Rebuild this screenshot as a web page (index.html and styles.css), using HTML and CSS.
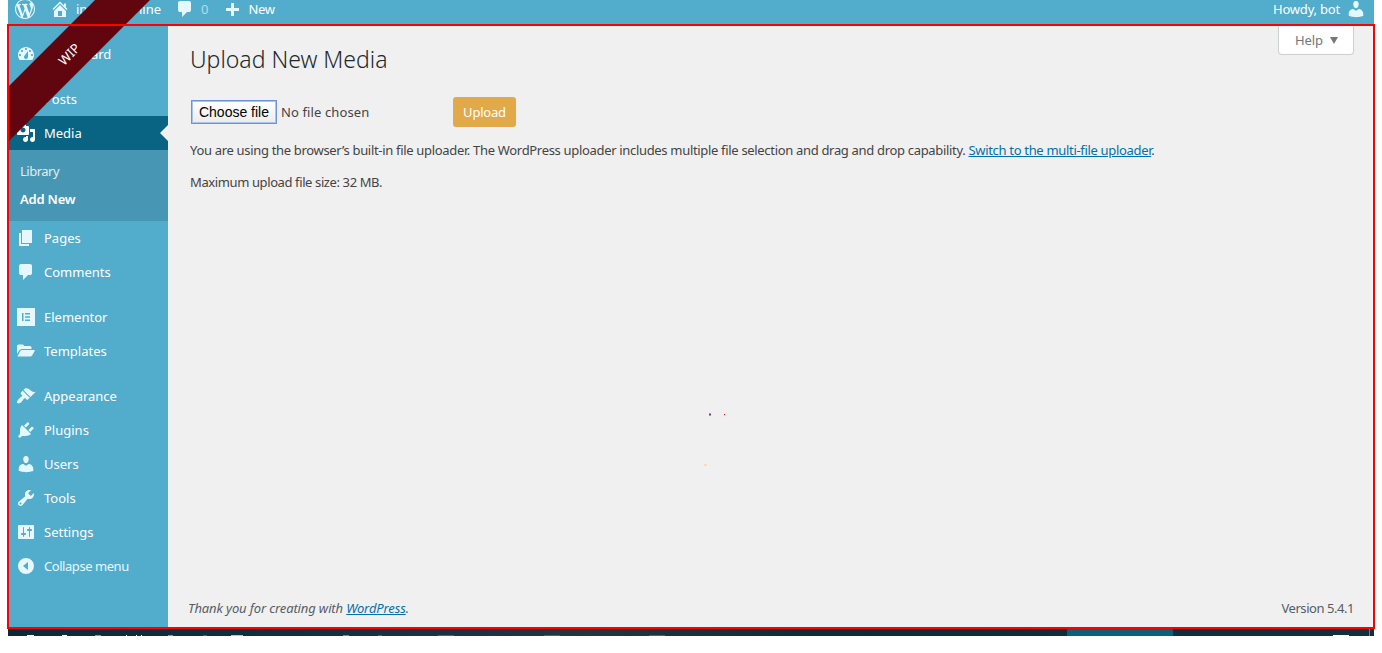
FILE: index.html
```html
<!DOCTYPE html>
<html lang="en">
<head>
<meta charset="utf-8">
<title>Upload New Media</title>
<link rel="stylesheet" href="styles.css">
</head>
<body>
<div class="screen">
  <header class="adminbar">
    <svg class="icon wp" viewBox="0 0 20 20"><path d="M20 10c0-5.51-4.49-10-10-10C4.48 0 0 4.49 0 10c0 5.52 4.48 10 10 10 5.51 0 10-4.48 10-10zM7.78 15.37L4.37 6.22c.55-.02 1.17-.08 1.17-.08.5-.06.44-1.13-.06-1.11 0 0-1.45.11-2.37.11-.18 0-.37 0-.58-.01C4.12 2.69 6.87 1.11 10 1.11c2.33 0 4.45.87 6.05 2.34-.68-.11-1.65.39-1.65 1.58 0 .74.45 1.36.9 2.1.35.61.55 1.36.55 2.46 0 1.49-1.4 5-1.4 5l-3.03-8.37c.54-.02.82-.17.82-.17.5-.05.44-1.25-.06-1.22 0 0-1.44.12-2.38.12-.87 0-2.33-.12-2.33-.12-.5-.03-.56 1.2-.06 1.22l.92.08 1.26 3.41zM17.41 10c.24-.64.74-1.87.43-4.25.7 1.29 1.05 2.71 1.05 4.25 0 3.29-1.73 6.24-4.4 7.78.97-2.59 1.94-5.2 2.92-7.78zM6.1 18.09C3.12 16.65 1.11 13.53 1.11 10c0-1.3.23-2.48.72-3.59C3.25 10.3 4.67 14.2 6.1 18.09zm4.03-6.63l2.58 6.98c-.86.29-1.76.45-2.71.45-.79 0-1.57-.11-2.29-.33.81-2.38 1.62-4.74 2.42-7.1z"/></svg>
    <svg class="icon home" viewBox="0 0 20 20"><path d="M16 8.5l1.53 1.53-1.06 1.06L10 4.6l-6.47 6.49-1.06-1.06L10 2.5l4 4v-2h2v4zm-6-2.46l6 5.99V18H4v-5.97zM12 17v-5H8v5h4z"/></svg>
    <span class="site"><span>int</span><span>line</span></span>
    <svg class="icon bubble" viewBox="0 0 20 20"><path d="M5 2h9q.82 0 1.41.59T16 4v7q0 .82-.59 1.41T14 13h-2l-5 5v-5H5q-.82 0-1.41-.59T3 11V4q0-.82.59-1.41T5 2z"/></svg>
    <span class="count">0</span>
    <svg class="icon plus" viewBox="0 0 20 20"><path d="M17 7v3h-5v5H9v-5H4V7h5V2h3v5h5z"/></svg>
    <span class="new">New</span>
    <span class="howdy">Howdy, bot</span>
    <svg class="icon me" viewBox="0 0 20 20"><path d="M10 9.25c-2.27 0-2.73-3.44-2.73-3.44C7 4.02 7.82 2 9.97 2c2.16 0 2.98 2.02 2.71 3.81 0 0-.41 3.44-2.68 3.44zm0 2.57L12.72 10c2.39 0 4.52 2.33 4.52 4.53v2.49s-3.65 1.13-7.24 1.13c-3.65 0-7.24-1.13-7.24-1.13v-2.49c0-2.25 1.94-4.48 4.47-4.48z"/></svg>
  </header>
  <div class="frame">
    <nav class="menu">
      <a class="item"><svg class="icon" viewBox="0 0 20 20"><path d="M3.76 16h12.48c1.1-1.37 1.76-3.11 1.76-5 0-4.42-3.58-8-8-8s-8 3.58-8 8c0 1.89.66 3.63 1.76 5zM10 4c.55 0 1 .45 1 1s-.45 1-1 1-1-.45-1-1 .45-1 1-1zM6 6c.55 0 1 .45 1 1s-.45 1-1 1-1-.45-1-1 .45-1 1-1zm8 0c.55 0 1 .45 1 1s-.45 1-1 1-1-.45-1-1 .45-1 1-1zm-5.37 5.55L12 7v6c0 1.1-.9 2-2 2s-2-.9-2-2c0-.57.24-1.08.63-1.45zM4 10c.55 0 1 .45 1 1s-.45 1-1 1-1-.45-1-1 .45-1 1-1zm12 0c.55 0 1 .45 1 1s-.45 1-1 1-1-.45-1-1 .45-1 1-1z"/></svg><span>Dashboard</span></a>
      <a class="item gap"><span class="icon"></span><span>Posts</span></a>
      <a class="item current"><svg class="icon" viewBox="0 0 20 20"><path d="M13 11V4c0-.55-.45-1-1-1h-1.67L9 1H5L3.67 3H2c-.55 0-1 .45-1 1v7c0 .55.45 1 1 1h10c.55 0 1-.45 1-1zM7 4.5c1.38 0 2.5 1.12 2.5 2.5S8.38 9.5 7 9.5 4.5 8.38 4.5 7 5.62 4.5 7 4.5zM14 6h5v10.5c0 1.38-1.12 2.5-2.5 2.5S14 17.88 14 16.5s1.12-2.5 2.5-2.5c.17 0 .34.02.5.05V9h-3V6zm-4 8.05V13h2v3.5c0 1.38-1.12 2.5-2.5 2.5S7 17.88 7 16.5 8.12 14 9.5 14c.17 0 .34.02.5.05z"/></svg><span>Media</span></a>
      <div class="submenu"><a class="library">Library</a><a class="active">Add New</a></div>
      <a class="item"><svg class="icon" viewBox="0 0 20 20"><path d="M6 15V2h10v13H6zm-1 1h8v2H3V5h2v11z"/></svg><span>Pages</span></a>
      <a class="item"><svg class="icon" viewBox="0 0 20 20"><path d="M5 2h9q.82 0 1.41.59T16 4v7q0 .82-.59 1.41T14 13h-2l-5 5v-5H5q-.82 0-1.41-.59T3 11V4q0-.82.59-1.41T5 2z"/></svg><span>Comments</span></a>
      <a class="item gap"><svg class="icon" viewBox="0 0 20 20"><path fill-rule="evenodd" d="M1.5 1H18.500q.5 0 .5.500V18.500q0 .5-.5.500H1.500q-.5 0-.5-.500V1.500q0-.5.500-.500zM6 6v8h1.500V6zM9 6v1.400h5V6zM9 9.300v1.400h5V9.300zM9 12.600V14h5v-1.400z"/></svg><span>Elementor</span></a>
      <a class="item"><svg class="icon" viewBox="0 0 20 20"><path d="M1 13V5q0-1.500 1.500-1.500h4q1.500 0 1.500 1.500h6q1.500 0 1.500 1.500V8H6q-1.800 0-2.800 1.600zM1.500 15.200L4.300 10q.6-1 1.800-1H18.200q1 0 .5 1l-2.600 4.400q-.6 1-1.800 1H2.500q-.6 0-1-.2z"/></svg><span>Templates</span></a>
      <a class="item gap"><svg class="icon" viewBox="0 0 20 20"><path d="M14.480 11.060L7.410 3.990l1.500-1.500c.5-.56 2.300-.47 3.510.32 1.210.8 1.430 1.280 2.910 2.100 1.180.64 2.450 1.260 4.450.85zm-.71.71L6.700 4.700 4.930 6.470c-.39.39-.39 1.020 0 1.410l1.060 1.060c.39.39.39 1.030 0 1.420-.6.6-1.430 1.110-2.210 1.690-.35.26-.7.53-1.010.84C1.430 14.230.4 16.080 1.400 17.070c.99 1 2.840-.03 4.180-1.360.31-.31.58-.66.85-1.020.57-.78 1.080-1.610 1.690-2.210.39-.39 1.020-.39 1.410 0l1.060 1.060c.39.39 1.020.39 1.410 0z"/></svg><span>Appearance</span></a>
      <a class="item"><svg class="icon" viewBox="0 0 20 20"><path d="M13.110 4.360L9.870 7.600 8 5.730l3.240-3.240c.35-.34 1.050-.2 1.560.32.52.51.66 1.210.31 1.550zm-8 1.770l.91-1.120 9.010 9.010-1.190.84c-.71.71-2.630 1.160-3.820 1.160H6.140L4.900 17.260c-.59.59-1.540.59-2.120 0-.59-.58-.59-1.530 0-2.120l1.240-1.240v-3.880c0-1.130.4-3.190 1.090-3.890zm7.260 3.970l3.240-3.240c.34-.35 1.040-.21 1.550.31.52.51.66 1.210.31 1.550l-3.240 3.250z"/></svg><span>Plugins</span></a>
      <a class="item"><svg class="icon" viewBox="0 0 20 20"><path d="M10 9.250c-2.270 0-2.730-3.440-2.730-3.440C7 4.020 7.820 2 9.970 2c2.160 0 2.980 2.020 2.710 3.810 0 0-.41 3.440-2.680 3.440zm0 2.570L12.720 10c2.390 0 4.520 2.330 4.520 4.530v2.490s-3.650 1.130-7.240 1.130c-3.650 0-7.240-1.130-7.240-1.130v-2.490c0-2.250 1.940-4.480 4.470-4.480z"/></svg><span>Users</span></a>
      <a class="item"><svg class="icon" viewBox="0 0 20 20"><path d="M16.680 9.770c-1.340 1.340-3.300 1.670-4.950.99l-5.410 6.520c-.99.99-2.590.99-3.580 0s-.99-2.590 0-3.570l6.520-5.420c-.68-1.650-.35-3.610.99-4.950 1.280-1.280 3.120-1.620 4.720-1.060l-2.890 2.890 2.820 2.820 2.860-2.870c.53 1.580.18 3.390-1.080 4.650zM3.810 16.210c.4.39 1.040.39 1.430 0 .4-.4.4-1.040 0-1.430-.39-.4-1.030-.4-1.430 0-.39.39-.39 1.030 0 1.430z"/></svg><span>Tools</span></a>
      <a class="item"><svg class="icon" viewBox="0 0 20 20"><path d="M18 16V4c0-.55-.45-1-1-1H3c-.55 0-1 .45-1 1v12c0 .55.45 1 1 1h14c.55 0 1-.45 1-1zM8 11h1c.55 0 1 .45 1 1s-.45 1-1 1H8v1.500c0 .28-.22.5-.5.5s-.5-.22-.5-.5V13H6c-.55 0-1-.45-1-1s.45-1 1-1h1V5.500c0-.28.22-.5.5-.5s.5.22.5.5V11zm5-2h-1c-.55 0-1-.45-1-1s.45-1 1-1h1V5.500c0-.28.22-.5.5-.5s.5.22.5.5V7h1c.55 0 1 .45 1 1s-.45 1-1 1h-1v5.500c0 .28-.22.5-.5.5s-.5-.22-.5-.5V9z"/></svg><span>Settings</span></a>
      <a class="item collapse"><svg class="icon" viewBox="0 0 20 20"><path fill-rule="evenodd" d="M10 2a8 8 0 1 0 0 16a8 8 0 1 0 0-16zM12 6v8l-5-4z"/></svg><span>Collapse menu</span></a>
    </nav>
    <main class="content">
      <button class="help"><span>Help</span><i></i></button>
      <h1>Upload New Media</h1>
      <form class="upload">
        <button type="button" class="choose">Choose file</button>
        <span class="nofile">No file chosen</span>
        <button type="button" class="submit">Upload</button>
      </form>
      <p class="intro">You are using the browser’s built-in file uploader. The WordPress uploader includes multiple file selection and drag and drop capability. <a>Switch to the multi-file uploader</a>.</p>
      <p class="max">Maximum upload file size: 32 MB.</p>
      <footer><em>Thank you for creating with <a>WordPress</a>.</em><span class="version">Version 5.4.1</span></footer>
    </main>
  </div>
  <svg class="taskbar" width="1366" height="7" viewBox="8 0 1366 7" shape-rendering="crispEdges">
    <defs><linearGradient id="tb"><stop offset="0" stop-color="#0c2939"/><stop offset=".2" stop-color="#10303f"/><stop offset=".34" stop-color="#1c3144"/><stop offset=".42" stop-color="#25353c"/><stop offset=".6" stop-color="#0c2c36"/><stop offset="1" stop-color="#12303b"/></linearGradient></defs>
    <rect x="8" width="1366" height="7" fill="url(#tb)"/>
    <path fill="#086079" d="M1067 0h106v7h-106z"/>
    <path fill="#6d8590" d="M1369 0h1v7h-1z"/>
    <path fill="#fff" d="M27 6h7v1h-7zM62 6h5v1h-5zM126 6h1v1h-1zM136 6h1v1h-1zM141 6h1v1h-1zM1333 6h16v1h-16z"/>
    <path fill="#8b9aa1" d="M95 6h6v1h-6zM168 6h5v1h-5z"/>
    <path fill="#e8c34f" d="M231 6h12v1h-12z"/>
    <path fill="#1ec75b" d="M343 6h6v1h-6z"/>
    <path fill="#1272b8" d="M203 6h4v1h-4zM378 6h4v1h-4zM438 6h16v1h-16zM544 6h16v1h-16zM649 6h16v1h-16z"/>
  </svg>
  <svg class="specks" width="26" height="54" viewBox="0 0 26 54" shape-rendering="crispEdges">
    <path fill="#c583c7" d="M9 0h2v3h-2z"/><path fill="#853a8e" d="M9 1h2v1h-2z"/><path fill="#f00" d="M24 1h1v1h-1z"/><path fill="#f8dcb8" d="M4 51h3v2h-3z"/>
  </svg>
  <div class="ribbon"><span>WIP</span></div>
  <div class="outline"></div>
</div>
</body>
</html>
```
FILE: styles.css
```css
* { box-sizing: border-box; }
body {
  margin: 0;
  background: #fff;
  color: #444;
  font: 13px/20px "Noto Sans", "Open Sans", sans-serif;
}
.screen {
  position: relative;
  width: 1366px;
  height: 653px;
  margin-left: 8px;
  overflow: visible;
}
.icon { width: 20px; height: 20px; flex: none; fill: #e5f8ff; }
.adminbar {
  display: flex;
  align-items: center;
  height: 24px;
  padding: 0 8px 6px 7px;
  background: #52accc;
  color: #fff;
}
.home { margin-left: 15px; }
.site {
  display: flex;
  justify-content: space-between;
  width: 85px;
  margin-left: 6px;
}
.bubble { margin-left: 13px; width: 22px; }
.count { margin-left: 5px; color: #b4dcea; }
.plus { margin-left: 14px; margin-top: 3px; }
.new { margin-left: 6px; letter-spacing: -.3px; }
.howdy { margin-left: auto; letter-spacing: -.2px; }
.me { margin-left: 6px; }
.frame { display: flex; height: 605px; }
.menu {
  width: 160px;
  padding-top: 13px;
  background: #52accc;
  color: #fff;
}
.item {
  position: relative;
  display: flex;
  align-items: center;
  gap: 8px;
  height: 34px;
  padding-left: 8px;
}
.gap { margin-top: 11px; }
.current { background: #096484; }
.current .icon { fill: #fff; }
.current::after {
  content: "";
  position: absolute;
  right: 0;
  top: 9px;
  border: 8px solid transparent;
  border-left-width: 0;
  border-right-color: #f0f0f0;
}
.submenu {
  display: flex;
  flex-direction: column;
  gap: 8px;
  height: 71px;
  padding: 11px 12px;
  background: #4796b3;
  color: #e2ecf1;
  letter-spacing: -.2px;
}
.library { letter-spacing: -.5px; }
.active { color: #fff; font-weight: 600; }
.collapse { color: #e5f8ff; letter-spacing: -.45px; }
.content {
  display: flex;
  flex-direction: column;
  flex: 1;
  padding: 0 20px 0 22px;
  background: #f0f0f0;
}
.help {
  display: flex;
  align-items: center;
  align-self: flex-end;
  gap: 7px;
  width: 76px;
  height: 31px;
  padding: 2px 0 0 16px;
  border: 1px solid #ccd0d4;
  border-top: 0;
  border-radius: 0 0 4px 4px;
  background: #fff;
  color: #72777c;
  font: inherit;
  letter-spacing: -.1px;
}
.help i {
  border: 4px solid transparent;
  border-top: 7px solid #72777c;
  border-bottom: 0;
}
h1 {
  margin: -12px 0 0;
  color: #23282d;
  font-size: 23px;
  font-weight: 300;
  line-height: 32px;
  letter-spacing: 0;
}
.upload { display: flex; align-items: center; height: 30px; margin-top: 22px; }
.choose {
  width: 86px;
  height: 24px;
  margin-left: 1px;
  padding: 0;
  border: 1px solid #6d92d8;
  box-shadow: inset 0 0 0 1px #a9c4f1;
  background: linear-gradient(#fff, #ececec);
  color: #000;
  font: 14px/20px "Liberation Sans", Arial, sans-serif;
}
.nofile { width: 176px; padding-left: 4px; letter-spacing: .12px; }
.submit {
  width: 63px;
  height: 30px;
  padding: 0;
  border: 0;
  border-radius: 3px;
  background: #e1a948;
  color: #fff;
  font: inherit;
  letter-spacing: -.2px;
}
p { margin: 0; }
a { color: inherit; }
.content a { color: #0073aa; text-decoration: underline; }
.intro { margin-top: 13px; white-space: nowrap; letter-spacing: -.32px; }
.max { margin-top: 12px; letter-spacing: -.39px; }
footer {
  display: flex;
  justify-content: space-between;
  margin: auto 0 11px -2px;
  color: #555d66;
  letter-spacing: -.13px;
}
.version { letter-spacing: -.45px; }
.taskbar { display: block; }
.specks { position: absolute; left: 692px; top: 413px; }
.ribbon {
  position: absolute;
  left: 1px;
  top: 0;
  width: 141px;
  height: 141px;
  background: #61050e;
  clip-path: polygon(86px 0, 141px 0, 0 141px, 0 86px);
  color: #fff;
}
.ribbon span {
  position: absolute;
  left: 40px;
  top: 44px;
  width: 40px;
  text-align: center;
  transform: rotate(-45deg);
}
.outline {
  position: absolute;
  left: -1px;
  top: 24px;
  width: 1368px;
  height: 605px;
  border: 2px solid #f00;
}
```
